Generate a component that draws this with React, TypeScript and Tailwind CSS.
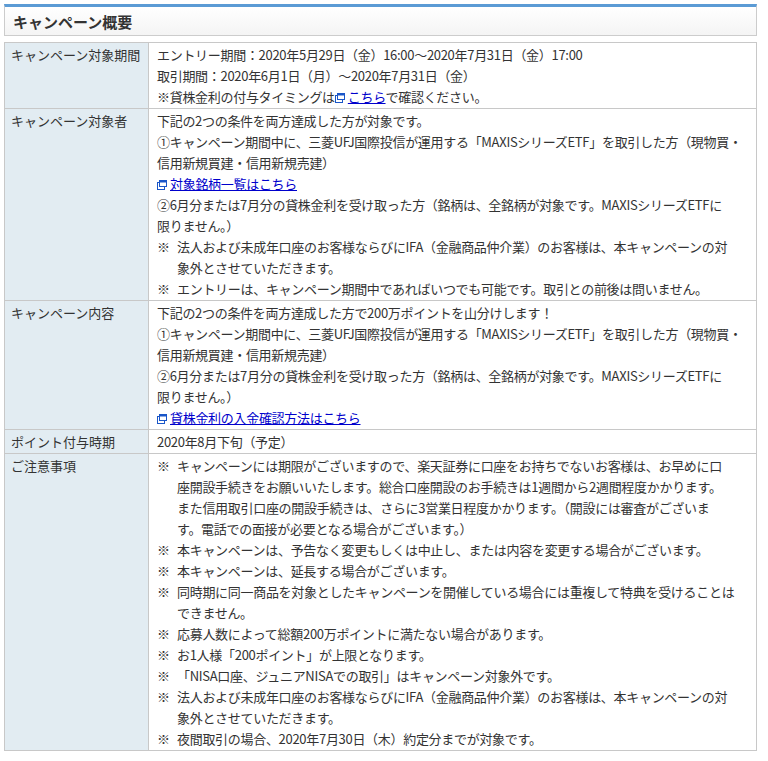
const LinkIcon = () => (
  <svg width="10" height="10" viewBox="0 0 10 10" className="inline-block mr-[3px] align-[-1px]">
    <rect x="0.5" y="2.5" width="7" height="7" fill="white" stroke="#1a56c8" />
    <rect x="2.5" y="0.5" width="7" height="6" fill="white" stroke="#1a56c8" />
    <rect x="2.5" y="0.5" width="7" height="2" fill="#1a56c8" />
  </svg>
);

const A = ({ children }: { children: React.ReactNode }) => (
  <a className="text-[#0000cc] underline">{children}</a>
);

const Note = ({ lines }: { lines: string[] }) => (
  <div className="flex">
    <span className="w-[20px] shrink-0">※</span>
    <div>
      {lines.map((l, i) => (
        <div key={i} className="whitespace-nowrap">{l}</div>
      ))}
    </div>
  </div>
);

const L = ({ children }: { children: React.ReactNode }) => (
  <div className="whitespace-nowrap">{children}</div>
);

const rows: { label: string; body: React.ReactNode }[] = [
  {
    label: 'キャンペーン対象期間',
    body: (
      <>
        <L>エントリー期間：2020年5月29日（金）16:00～2020年7月31日（金）17:00</L>
        <L>取引期間：2020年6月1日（月）～2020年7月31日（金）</L>
        <L>※貸株金利の付与タイミングは<LinkIcon /><A>こちら</A>で確認ください。</L>
      </>
    ),
  },
  {
    label: 'キャンペーン対象者',
    body: (
      <>
        <L>下記の2つの条件を両方達成した方が対象です。</L>
        <L>①キャンペーン期間中に、三菱UFJ国際投信が運用する「MAXISシリーズETF」を取引した方（現物買・</L>
        <L>信用新規買建・信用新規売建）</L>
        <L><LinkIcon /><A>対象銘柄一覧はこちら</A></L>
        <L>②6月分または7月分の貸株金利を受け取った方（銘柄は、全銘柄が対象です。MAXISシリーズETFに</L>
        <L>限りません。）</L>
        <Note lines={['法人および未成年口座のお客様ならびにIFA（金融商品仲介業）のお客様は、本キャンペーンの対', '象外とさせていただきます。']} />
        <Note lines={['エントリーは、キャンペーン期間中であればいつでも可能です。取引との前後は問いません。']} />
      </>
    ),
  },
  {
    label: 'キャンペーン内容',
    body: (
      <>
        <L>下記の2つの条件を両方達成した方で200万ポイントを山分けします！</L>
        <L>①キャンペーン期間中に、三菱UFJ国際投信が運用する「MAXISシリーズETF」を取引した方（現物買・</L>
        <L>信用新規買建・信用新規売建）</L>
        <L>②6月分または7月分の貸株金利を受け取った方（銘柄は、全銘柄が対象です。MAXISシリーズETFに</L>
        <L>限りません。）</L>
        <L><LinkIcon /><A>貸株金利の入金確認方法はこちら</A></L>
      </>
    ),
  },
  { label: 'ポイント付与時期', body: <L>2020年8月下旬（予定）</L> },
  {
    label: 'ご注意事項',
    body: (
      <>
        <Note lines={['キャンペーンには期限がございますので、楽天証券に口座をお持ちでないお客様は、お早めに口', '座開設手続きをお願いいたします。総合口座開設のお手続きは1週間から2週間程度かかります。', 'また信用取引口座の開設手続きは、さらに3営業日程度かかります。（開設には審査がございま', 'す。電話での面接が必要となる場合がございます。）']} />
        <Note lines={['本キャンペーンは、予告なく変更もしくは中止し、または内容を変更する場合がございます。']} />
        <Note lines={['本キャンペーンは、延長する場合がございます。']} />
        <Note lines={['同時期に同一商品を対象としたキャンペーンを開催している場合には重複して特典を受けることは', 'できません。']} />
        <Note lines={['応募人数によって総額200万ポイントに満たない場合があります。']} />
        <Note lines={['お1人様「200ポイント」が上限となります。']} />
        <Note lines={['「NISA口座、ジュニアNISAでの取引」はキャンペーン対象外です。']} />
        <Note lines={['法人および未成年口座のお客様ならびにIFA（金融商品仲介業）のお客様は、本キャンペーンの対', '象外とさせていただきます。']} />
        <Note lines={['夜間取引の場合、2020年7月30日（木）約定分までが対象です。']} />
      </>
    ),
  },
];

export default function App() {
  return (
    <div className="bg-white w-[768px] h-[761px] pl-[4px] pt-[4px] text-[13px] leading-[21px] text-[#333]" style={{ fontFamily: '"Noto Sans CJK JP", sans-serif' }}>
      <div className="w-[753px]">
        <div className="h-[32px] border border-[#ccc] border-t-[3px] border-t-[#5b9bd5] bg-gradient-to-b from-white to-[#f4f4f4] flex items-center px-[8px]">
          <h2 className="text-[15px] font-bold text-[#333]">キャンペーン概要</h2>
        </div>
        <table className="mt-[6px] w-full border-collapse">
          <tbody>
            {rows.map((r) => (
              <tr key={r.label}>
                <td className="w-[144px] align-top border border-[#c8c8c8] bg-[#e2ecf2] px-[6px] pt-[1px] pb-0">{r.label}</td>
                <td className="align-top border border-[#c8c8c8] px-[8px] pt-[1px] pb-[1px] tracking-[-0.3px]">{r.body}</td>
              </tr>
            ))}
          </tbody>
        </table>
      </div>
    </div>
  );
}
